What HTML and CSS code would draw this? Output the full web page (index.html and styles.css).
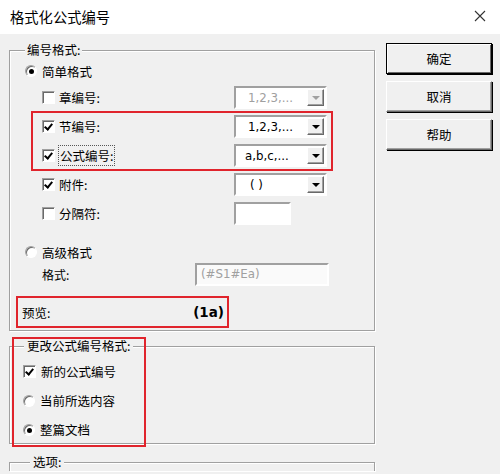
FILE: index.html
```html
<!DOCTYPE html>
<html>
<head>
<meta charset="utf-8">
<link rel="stylesheet" href="styles.css">
</head>
<body>
<div class="titlebar">
  <span class="title">格式化公式编号</span>
  <svg class="close" width="12" height="12" viewBox="0 0 12 12"><path d="M1 1L11 11M11 1L1 11" stroke="#333" stroke-width="1.1" fill="none"/></svg>
</div>
<div class="main">
  <div class="left">
    <section class="group g1">
      <div class="legend-row"><span class="legend">编号格式:</span></div>
      <div class="radio-row first"><span class="radio on"></span><span>简单格式</span></div>
      <div class="row"><span class="chk"></span><span class="lbl">章编号:</span><div class="combo disabled"><span class="ctext">1,2,3,...</span><span class="arrow"></span></div></div>
      <div class="hl">
        <div class="row"><span class="chk on"></span><span class="lbl">节编号:</span><div class="combo"><span class="ctext">1,2,3,...</span><span class="arrow"></span></div></div>
        <div class="row"><span class="chk on"></span><span class="lbl"><span class="focus">公式编号:</span></span><div class="combo"><span class="ctext t2">a,b,c,...</span><span class="arrow"></span></div></div>
      </div>
      <div class="row"><span class="chk on"></span><span class="lbl">附件:</span><div class="combo"><span class="ctext t3">( )</span><span class="arrow"></span></div></div>
      <div class="row"><span class="chk"></span><span class="lbl">分隔符:</span><div class="textbox small"></div></div>
      <div class="radio-row adv"><span class="radio"></span><span>高级格式</span></div>
      <div class="fmt-row"><span class="fmt-lbl">格式:</span><div class="textbox wide"><span class="ph">(#S1#Ea)</span></div></div>
      <div class="preview"><span>预览:</span><span class="pv">(1a)</span></div>
    </section>
    <section class="group g2">
      <div class="legend-row"><span class="legend">更改公式编号格式:</span></div>
      <div class="opt first"><span class="chk on"></span><span>新的公式编号</span></div>
      <div class="opt"><span class="radio"></span><span>当前所选内容</span></div>
      <div class="opt"><span class="radio on"></span><span>整篇文档</span></div>
    </section>
    <section class="group g3">
      <div class="legend-row"><span class="legend">选项:</span></div>
    </section>
  </div>
  <div class="buttons">
    <div class="btn default">确定</div>
    <div class="btn">取消</div>
    <div class="btn">帮助</div>
  </div>
</div>
</body>
</html>
```

FILE: styles.css
```css
html, body {
  margin: 0;
  padding: 0;
}
body {
  width: 500px;
  height: 474px;
  overflow: hidden;
  background: #f0f0f0;
  font-family: "Noto Sans CJK SC", "Microsoft YaHei", sans-serif;
  font-size: 12.5px;
  color: #000;
}
.titlebar {
  height: 34px;
  background: #fff;
  display: flex;
  align-items: center;
  justify-content: space-between;
  padding: 0 14px 2px 10px;
  box-sizing: border-box;
}
.title {
  font-size: 14.3px;
  color: #000;
}
.close {
  display: block;
}
.main {
  display: flex;
  padding: 9px 0 0 9px;
  height: 431px;
  box-sizing: border-box;
}
.left {
  width: 366px;
  display: flex;
  flex-direction: column;
  margin-top: 7px;
}
.group {
  border: 1px solid #a0a0a0;
  box-shadow: inset 1px 1px 0 #fff, 1px 1px 0 #fff;
  box-sizing: border-box;
  position: relative;
  flex: none;
}
.legend-row {
  display: flex;
  margin-top: -10px;
  height: 18px;
  padding-left: 15px;
}
.legend {
  padding: 0 2px;
  line-height: 18px;
  background: #f0f0f0;
}
.g1 {
  height: 281px;
}
.radio-row {
  display: flex;
  align-items: center;
  height: 24px;
  gap: 5px;
  padding-left: 15px;
}
.radio-row.adv {
  margin-top: 14px;
  height: 20px;
}
.radio {
  width: 12px;
  height: 12px;
  border-radius: 50%;
  box-sizing: border-box;
  background: #fff;
  border: 1px solid;
  border-color: #a0a0a0 #fff #fff #a0a0a0;
  box-shadow: inset 1px 1px 0 #696969;
  position: relative;
  flex: none;
}
.radio.on::after {
  content: "";
  position: absolute;
  left: 3px;
  top: 3px;
  width: 5px;
  height: 5px;
  border-radius: 50%;
  background: #000;
}
.row {
  display: flex;
  align-items: center;
  height: 29px;
  margin-left: 22px;
  width: 300px;
  padding: 0 5px 0 10px;
  box-sizing: border-box;
}
.chk {
  width: 13px;
  height: 13px;
  box-sizing: border-box;
  background: #fff;
  border: 1px solid;
  border-color: #a0a0a0 #fff #fff #a0a0a0;
  box-shadow: inset 1px 1px 0 #696969;
  position: relative;
  flex: none;
}
.chk.on::after {
  content: "";
  position: absolute;
  left: 3px;
  top: 1px;
  width: 3px;
  height: 6px;
  border: solid #000;
  border-width: 0 2px 2px 0;
  transform: rotate(40deg);
}
.lbl {
  margin-left: 4px;
  flex: 1;
  line-height: 18px;
}
.focus {
  outline: 1px dotted #555;
  padding: 0 1px;
}
.hl {
  outline: 2px solid #e0242c;
  outline-offset: -1px;
  width: 300px;
  margin-left: 22px;
}
.hl .row {
  margin-left: 0;
}
.combo {
  width: 93px;
  height: 23px;
  flex: none;
  box-sizing: border-box;
  border: 2px solid;
  border-color: #a0a0a0 #fff #fff #a0a0a0;
  background: #fff;
  display: flex;
  align-items: center;
  justify-content: space-between;
  padding: 0 1px 0 0;
  font-family: "DejaVu Sans", sans-serif;
  font-size: 11.8px;
}
.ctext {
  padding-left: 12px;
}
.ctext.t2 { padding-left: 9px; }
.ctext.t3 { padding-left: 14px; }
.combo.disabled {
  color: #a0a0a0;
}
.arrow {
  width: 17px;
  height: 17px;
  background: #f0f0f0;
  box-sizing: border-box;
  border: 1px solid;
  border-color: #fff #696969 #696969 #fff;
  box-shadow: inset -1px -1px 0 #a0a0a0;
  position: relative;
}
.arrow::after {
  content: "";
  position: absolute;
  left: 4px;
  top: 6px;
  border-left: 4px solid transparent;
  border-right: 4px solid transparent;
  border-top: 4px solid #000;
}
.combo.disabled .arrow::after {
  border-top-color: #a0a0a0;
}
.textbox {
  box-sizing: border-box;
  height: 23px;
  flex: none;
  border: 2px solid;
  border-color: #a0a0a0 #fff #fff #a0a0a0;
  background: #fff;
}
.textbox.small {
  width: 57px;
  margin-right: 36px;
}
.fmt-row {
  display: flex;
  align-items: center;
  height: 24px;
  padding-left: 32px;
}
.fmt-lbl {
  width: 153px;
  font-size: 12px;
}
.textbox.wide {
  width: 134px;
  display: flex;
  align-items: center;
  background: #fafafa;
}
.ph {
  font-family: "DejaVu Sans", sans-serif;
  font-size: 11.8px;
  color: #a0a0a0;
  padding-left: 4px;
}
.preview {
  margin: 10px 0 0 6px;
  width: 213px;
  height: 32px;
  box-sizing: border-box;
  outline: 2px solid #e0242c;
  outline-offset: -2px;
  display: flex;
  align-items: center;
  justify-content: space-between;
  padding: 0 5px 0 6px;
}
.pv {
  font-family: "DejaVu Sans", sans-serif;
  font-weight: bold;
  font-size: 13.5px;
}
.g2 {
  margin-top: 15px;
  height: 98px;
}
.g2 .legend-row {
  padding-left: 14px;
}
.g2 .legend, .g3 .legend {
  padding: 0 3px;
}
.g2::before {
  content: "";
  position: absolute;
  left: 2px;
  top: -10px;
  width: 134px;
  height: 110px;
  outline: 2px solid #e0242c;
  outline-offset: -2px;
  z-index: 2;
  pointer-events: none;
}
.opt {
  display: flex;
  align-items: center;
  gap: 5px;
  height: 29px;
  padding-left: 13px;
}
.opt.first {
  margin-top: 2px;
}
.g3 {
  margin-top: 18px;
  flex: 1;
  border-bottom: none;
}
.g3 .legend-row {
  padding-left: 20px;
}
.buttons {
  margin-left: 11px;
  display: flex;
  flex-direction: column;
  gap: 7px;
}
.btn {
  width: 106px;
  height: 31px;
  box-sizing: border-box;
  display: flex;
  align-items: center;
  justify-content: center;
  background: #f0f0f0;
  border: 1px solid;
  border-color: #fff #696969 #696969 #fff;
  box-shadow: 1px 1px 0 #000, inset -1px -1px 0 #a0a0a0;
  font-size: 12.5px;
}
.btn.default {
  border: 1px solid #000;
  box-shadow: inset 1px 1px 0 #fff, inset -1px -1px 0 #696969, 1px 1px 0 #000;
}
```
